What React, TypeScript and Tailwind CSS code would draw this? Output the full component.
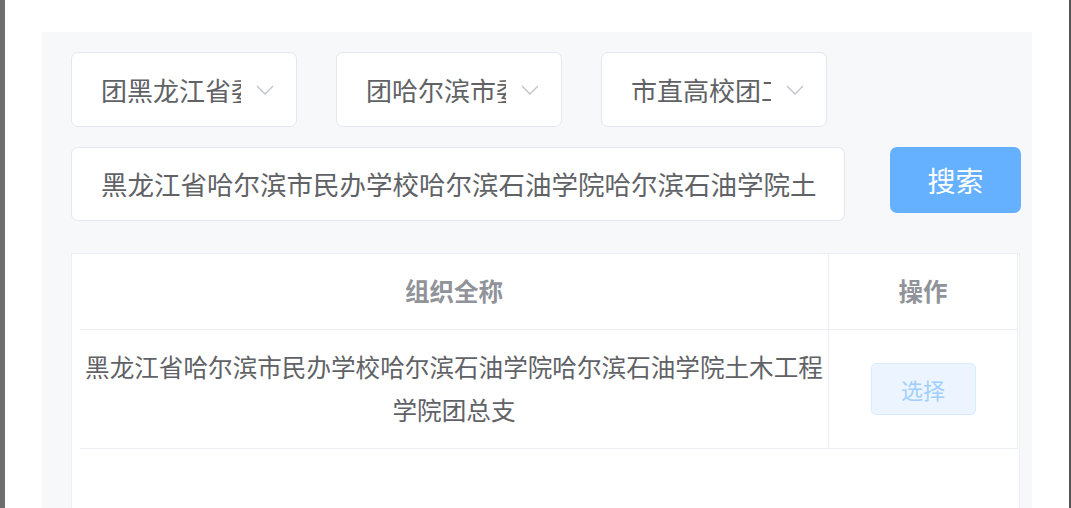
import React from "react";

const FONT = { fontFamily: '"Noto Sans CJK SC", "Noto Sans", sans-serif' };

// ─── Ícone da seta do select ──────────────────────────────────────────────────

const Chevron = () => (
  <svg className="w-[18px] h-[10px] shrink-0" viewBox="0 0 18 10" fill="none" stroke="#c0c4cc" strokeWidth={1.4}>
    <path d="M1 1l8 8 8-8" />
  </svg>
);

function SelectBox({ value }: { value: string }) {
  return (
    <div className="w-[226px] h-[75px] bg-white border border-[#e4e7ed] rounded-[7px] flex items-center pl-[29px] pr-[22px]">
      <div className="w-[140px] overflow-hidden whitespace-nowrap text-[26px] text-[#606266] leading-none">
        {value}
      </div>
      <div className="ml-auto">
        <Chevron />
      </div>
    </div>
  );
}

export default function App() {
  return (
    <div className="w-[1071px] h-[508px] flex bg-white overflow-hidden" style={FONT}>
      <div className="w-[5px] bg-[#6e6e6e]" />
      <div className="flex-1 pt-[32px] pl-[37px] pr-[37px]">
        <div className="h-full bg-[#f7f8fa] pl-[29px] pt-[20px]">
          {/* Selects */}
          <div className="flex gap-[39px]">
            <SelectBox value="团黑龙江省委员会" />
            <SelectBox value="团哈尔滨市委员会" />
            <SelectBox value="市直高校团工委" />
          </div>

          {/* Busca */}
          <div className="flex items-start mt-[20px]">
            <div className="w-[774px] h-[74px] bg-white border border-[#e4e7ed] rounded-[7px] flex items-center pl-[29px] pr-[20px]">
              <div className="overflow-hidden whitespace-nowrap text-[26.5px] text-[#606266] leading-none">
                黑龙江省哈尔滨市民办学校哈尔滨石油学院哈尔滨石油学院土
              </div>
            </div>
            <button className="ml-[45px] w-[131px] h-[66px] rounded-[7px] bg-[#66b1ff] text-white text-[28px] leading-none">
              搜索
            </button>
          </div>

          {/* Tabela */}
          <div className="mt-[32px] w-[949px] h-[300px] bg-white border border-[#ebeef5] pl-[8px] pr-[1px]">
            <div className="flex h-[76px] border-b border-r border-[#ebeef5]">
              <div className="w-[748px] flex items-center justify-center text-[24.5px] font-bold text-[#909399]">
                组织全称
              </div>
              <div className="flex-1 border-l border-[#ebeef5] flex items-center justify-center text-[24.5px] font-bold text-[#909399]">
                操作
              </div>
            </div>
            <div className="flex h-[119px] border-b border-r border-[#ebeef5]">
              <div className="w-[748px] flex items-center justify-center text-center text-[24.6px] leading-[43px] text-[#606266] -mt-[3px]">
                黑龙江省哈尔滨市民办学校哈尔滨石油学院哈尔滨石油学院土木工程学院团总支
              </div>
              <div className="flex-1 border-l border-[#ebeef5] flex items-center justify-center">
                <button className="w-[105px] h-[52px] rounded-[5px] bg-[#ecf5ff] border border-[#d9ecff] text-[#a0cfff] text-[22px] leading-none">
                  选择
                </button>
              </div>
            </div>
          </div>
        </div>
      </div>
      <div className="w-[2px] bg-[#555555]" />
    </div>
  );
}
